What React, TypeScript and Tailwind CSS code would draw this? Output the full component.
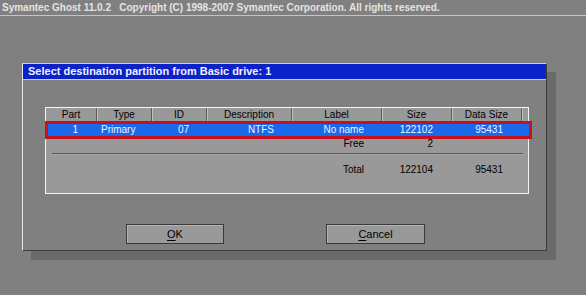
import React from "react";

type Cells = [string, string, string, string, string, string, string];

const headers = [
  { label: "Part", w: "w-[51px]" },
  { label: "Type", w: "w-[55px]" },
  { label: "ID", w: "w-[55px]" },
  { label: "Description", w: "w-[85px]" },
  { label: "Label", w: "w-[90px]" },
  { label: "Size", w: "w-[70px]" },
  { label: "Data Size", w: "w-[70px]" },
];

function Row({ cells, className }: { cells: Cells; className: string }) {
  return (
    <div className={`flex items-center ${className}`}>
      <div className="w-[30px] text-right">{cells[0]}</div>
      <div className="w-[100px] pl-[23px]">{cells[1]}</div>
      <div className="w-[40px]">{cells[2]}</div>
      <div className="w-[56px] text-right">{cells[3]}</div>
      <div className="w-[90px] text-right">{cells[4]}</div>
      <div className="w-[69px] text-right">{cells[5]}</div>
      <div className="w-[70px] text-right">{cells[6]}</div>
    </div>
  );
}

export default function App() {
  return (
    <div className="w-[586px] h-[295px] bg-[#808080] overflow-hidden font-['Liberation_Sans',sans-serif] text-[10px] text-black">
      {/* top banner */}
      <div className="h-[16px] border-b border-[#c4c4c4] pl-[2px] pt-[2px] text-[10px] leading-[11px] font-bold text-[#e4e4e4] whitespace-pre">
        Symantec Ghost 11.0.2   Copyright (C) 1998-2007 Symantec Corporation. All rights reserved.
      </div>

      {/* dialog */}
      <div className="ml-[22px] mt-[47px] w-[525px] h-[188px] bg-[#808080] border border-l-[#e8e8e8] border-t-[#d0d0d0] border-r-[#3c3c3c] border-b-[#3c3c3c] shadow-[9px_9px_0_#6a6a6a] flex flex-col">
        <div className="h-[16px] bg-[#0a22c8] border-b border-[#c8c8f0] pl-[5px] text-[11px] leading-[15px] font-bold text-[#f0f0ff]">
          Select destination partition from Basic drive: 1
        </div>

        {/* partition table */}
        <div className="ml-[22px] mt-[27px] w-[484px] h-[87px] bg-[#999999] border border-[#f4f4f4] flex flex-col">
          <div className="flex h-[13px] leading-[14px]">
            {headers.map((h) => (
              <div
                key={h.label}
                className={`${h.w} text-center border-r border-[#5a5a5a] shadow-[1px_0_0_#c0c0c0]`}
              >
                {h.label}
              </div>
            ))}
          </div>
          <Row
            cells={["1", "Primary", "07", "NTFS", "No name", "122102", "95431"]}
            className="-ml-[1px] w-[487px] h-[18px] border-[3px] border-[#c4121c] bg-[#1a68ec] text-[#eef6ff] leading-[12px]"
          />
          <Row
            cells={["", "", "", "", "Free", "2", ""]}
            className="pl-[2px] h-[10px] leading-[10px]"
          />
          <div className="ml-[6px] mt-[4px] w-[471px] h-[2px] border-t border-[#555555] border-b border-b-[#a8a8a8]" />
          <Row
            cells={["", "", "", "", "Total", "122104", "95431"]}
            className="pl-[2px] h-[14px] leading-[14px] mt-[8px]"
          />
        </div>

        {/* buttons */}
        <div className="flex mt-[30px] ml-[103px] gap-[102px]">
          <button className="w-[98px] h-[20px] bg-[#999999] border border-[#3a3a3a] shadow-[inset_1px_1px_0_#b4b4b4] text-[11px] leading-[18px] text-black">
            <span className="underline underline-offset-2">O</span>K
          </button>
          <button className="w-[99px] h-[20px] bg-[#999999] border border-[#3a3a3a] shadow-[inset_1px_1px_0_#b4b4b4] text-[11px] leading-[18px] text-black">
            <span className="underline underline-offset-2">C</span>ancel
          </button>
        </div>
      </div>
    </div>
  );
}
